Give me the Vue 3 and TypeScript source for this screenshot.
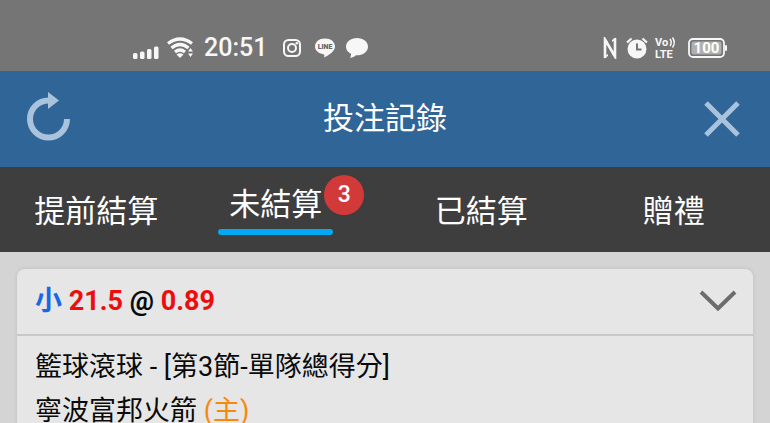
<script setup lang="ts">
import { ref } from 'vue'

interface Tab {
  id: string
  label: string
  count?: number
}

const tabs: Tab[] = [
  { id: 'early', label: '提前結算' },
  { id: 'open', label: '未結算', count: 3 },
  { id: 'settled', label: '已結算' },
  { id: 'gift', label: '贈禮' },
]
const active = ref('open')
const expanded = ref(true)
</script>

<template>
  <div class="screen">
    <div class="status">
      <div class="group">
        <svg class="signal" width="26" height="14" viewBox="0 0 26 14" aria-hidden="true">
          <g fill="#f7f7f7">
            <rect x="0" y="8" width="4.500" height="6" rx="1.500" />
            <rect x="7" y="6.500" width="4.500" height="7.500" rx="1.500" />
            <rect x="14" y="4" width="4.500" height="10" rx="1.500" />
            <rect x="21" y="1.500" width="4.500" height="12.500" rx="1.500" />
          </g>
        </svg>
        <svg class="wifi" width="28" height="22" viewBox="0 0 28 22" aria-hidden="true">
          <g fill="none" stroke="#f7f7f7" stroke-width="3.200">
            <path d="M1 6.500Q13 -2.500 25 6.500" />
            <path d="M4.500 11Q13 4 21.500 11" />
            <path d="M8 15Q13 11 18 15" />
          </g>
          <path d="M9.500 17.500Q13 15 16.500 17.500L13 21Z" fill="#f7f7f7" />
          <path d="M21 14.500L23.500 11L26 14.500ZM21 16.500H26L23.500 20Z" fill="#f7f7f7" />
        </svg>
        <span class="clock">20:51</span>
        <svg class="insta" width="20" height="20" viewBox="0 0 20 20" aria-hidden="true">
          <g fill="none" stroke="#f7f7f7" stroke-width="2">
            <rect x="2" y="2" width="16" height="16" rx="4.500" />
            <circle cx="10" cy="10" r="4" />
          </g>
          <circle cx="14.800" cy="5.200" r="1.300" fill="#f7f7f7" />
        </svg>
        <svg class="line" width="22" height="20" viewBox="0 0 22 20" aria-hidden="true">
          <path d="M11 .5C5 .5 1 4 1 8.600C1 12.500 4.500 15.500 9.300 16.300C10.700 16.600 10.300 17.500 10.200 19.500C13 18.300 21 13.800 21 8.600C21 4 17 .5 11 .5Z" fill="#f7f7f7" />
          <text x="11" y="11" text-anchor="middle" class="line-text">LINE</text>
        </svg>
        <svg width="24" height="22" viewBox="0 0 24 22" aria-hidden="true">
          <path d="M12 1C5.800 1 1 4.700 1 9.700C1 12.800 3 15.300 6 16.800C6 18.800 5.600 20 5 21C7.500 20.700 9.500 19.500 11 18.300C17.800 18.500 23 14.700 23 9.700C23 4.700 18.200 1 12 1Z" fill="#f7f7f7" />
        </svg>
      </div>
      <div class="group">
        <svg width="14" height="22" viewBox="0 0 14 22" aria-hidden="true">
          <path d="M2 21V2.500L12 19.500V1" fill="none" stroke="#f7f7f7" stroke-width="2.600" />
          <path d="M1 1L5 4.500V9L1 3ZM13 21L9 17.500V13L13 19ZM1 21.500L5 19V17L2 19ZM13 .5L9 3V5L12 3Z" fill="#f7f7f7" />
        </svg>
        <svg class="alarm" width="22" height="22" viewBox="0 0 22 22" aria-hidden="true">
          <circle cx="11" cy="12" r="9.500" fill="#f7f7f7" />
          <path d="M1 5.500L5.500 1.500M21 5.500L16.500 1.500" stroke="#f7f7f7" stroke-width="2.200" />
          <path d="M11 6.500V12.500H15.500" fill="none" stroke="#757575" stroke-width="2" />
        </svg>
        <svg class="volte" width="22" height="22" viewBox="0 0 22 22" aria-hidden="true">
          <text x="0" y="9" class="volte-text">Vo</text>
          <path d="M15 2Q17.500 5.500 15 9M17.500 .5Q21 5.500 17.500 10.500" fill="none" stroke="#f7f7f7" stroke-width="1.500" />
          <text x="0" y="21" class="volte-text">LTE</text>
        </svg>
        <svg class="battery" width="39" height="20" viewBox="0 0 39 20" aria-hidden="true">
          <rect x="1" y="1" width="35" height="18" rx="4" fill="none" stroke="#f7f7f7" stroke-width="1.800" />
          <rect x="3.500" y="3.500" width="30" height="13" rx="2" fill="#b0b0b0" />
          <rect x="37" y="7" width="2" height="6" rx="1" fill="#f7f7f7" />
          <text x="18.500" y="15" text-anchor="middle" class="battery-text">100</text>
        </svg>
      </div>
    </div>

    <header class="header">
      <button type="button" class="icon-button" aria-label="重新整理">
        <svg width="44" height="50" viewBox="0 0 44 50">
          <path d="M41 25A18.500 18.500 0 1 1 22.500 6.500" fill="none" stroke="#a9c3dc" stroke-width="6" />
          <path d="M22 -2L33 6.500L22 15Z" fill="#a9c3dc" />
        </svg>
      </button>
      <h1>投注記錄</h1>
      <button type="button" class="icon-button" aria-label="關閉">
        <svg width="36" height="36" viewBox="0 0 36 36">
          <path d="M2 2L34 34M34 2L2 34" stroke="#a9c3dc" stroke-width="5" />
        </svg>
      </button>
    </header>

    <nav class="tabs">
      <button
        v-for="tab in tabs"
        :key="tab.id"
        type="button"
        class="tab"
        :class="{ active: tab.id === active, counted: tab.count }"
        @click="active = tab.id"
      >
        <span class="tab-label">
          {{ tab.label }}
          <span v-if="tab.count" class="badge">{{ tab.count }}</span>
        </span>
      </button>
    </nav>

    <main class="content">
      <article class="card">
        <button type="button" class="card-head" :aria-expanded="expanded" @click="expanded = !expanded">
          <span class="pick"><span class="side">小</span> <span class="num">21.5</span> @ <span class="num">0.89</span></span>
          <svg width="38" height="22" viewBox="0 0 38 22" aria-hidden="true">
            <path d="M2 2L19 18.500L36 2" fill="none" stroke="#6c6c6c" stroke-width="4" />
          </svg>
        </button>
        <div v-if="expanded" class="card-body">
          <p>籃球滾球 - [第3節-單隊總得分]</p>
          <p>寧波富邦火箭 <span class="home">(主)</span></p>
        </div>
      </article>
    </main>
  </div>
</template>

<style>
body {
  margin: 0;
  background: #d4d4d4;
}
</style>

<style scoped>
.screen {
  display: flex;
  flex-direction: column;
  height: 100vh;
  overflow: hidden;
  background: #d4d4d4;
  font-family: Roboto, "Noto Sans CJK TC", sans-serif;
}
button {
  border: 0;
  padding: 0;
  background: none;
  color: inherit;
  font: inherit;
  cursor: pointer;
}
.status {
  display: flex;
  flex: none;
  justify-content: space-between;
  box-sizing: border-box;
  height: 71px;
  padding: 26px 43px 0 133px;
  background: #757575;
  color: #f7f7f7;
}
.group {
  display: flex;
  align-items: center;
  height: 44px;
}
.signal {
  margin: 8px 8px 0 0;
}
.wifi {
  margin-right: 9px;
}
.clock {
  margin-right: 15px;
  font-size: 25px;
  font-weight: 500;
  line-height: 44px;
}
.insta {
  margin-right: 12px;
}
.line {
  margin-right: 9px;
}
.line-text {
  fill: #666;
  font-size: 7px;
  font-weight: 900;
}
.alarm {
  margin: 0 7px 0 9px;
}
.volte-text {
  fill: #f7f7f7;
  font-size: 11px;
  font-weight: 700;
}
.volte {
  overflow: visible;
}
.battery {
  margin-left: 11px;
}
.battery-text {
  fill: #fff;
  font-size: 15px;
  font-weight: 700;
}
.header {
  display: flex;
  flex: none;
  align-items: center;
  justify-content: space-between;
  height: 96px;
  padding: 0 26px;
  background: #306598;
}
.icon-button {
  display: flex;
  align-items: center;
  justify-content: center;
  width: 44px;
  height: 52px;
}
.icon-button svg {
  overflow: visible;
}
.header h1 {
  margin: 0;
  color: #fff;
  font-size: 31px;
  font-weight: 400;
  line-height: 44px;
}
.tabs {
  display: grid;
  flex: none;
  grid-template-columns: repeat(4, 1fr);
  height: 85px;
  background: #3e3e3e;
  color: #fff;
  font-size: 31px;
}
.tab {
  display: flex;
  align-items: center;
  justify-content: center;
  padding-top: 5px;
}
.tab-label {
  position: relative;
  line-height: 44px;
}
.active .tab-label {
  padding: 0 11px 4px;
  margin-bottom: 6px;
}
.active .tab-label::after {
  content: "";
  display: block;
  height: 6px;
  margin: 2px -11px -4px;
  border-radius: 3px;
  background: #03a9f4;
}
.counted {
  padding-right: 26px;
}
.badge {
  position: absolute;
  top: -8px;
  right: -31px;
  width: 40px;
  height: 40px;
  border-radius: 50%;
  background: #d23939;
  font-size: 23px;
  font-weight: 500;
  line-height: 40px;
  text-align: center;
}
.content {
  padding: 17px;
}
.card {
  border-radius: 8px;
  background: #e6e6e6;
  box-shadow: 0 0 4px rgba(0, 0, 0, 0.1);
  color: #0a0a0a;
}
.card-head {
  display: flex;
  align-items: center;
  justify-content: space-between;
  width: 100%;
  height: 67px;
  padding: 0 16px 2px 18px;
  border-bottom: 2px solid #c8c8c8;
}
.pick {
  font-size: 27px;
  font-weight: 700;
  line-height: 44px;
}
.side {
  color: #1668e3;
}
.num {
  color: #ee0d0d;
}
.card-body {
  padding: 9px 18px;
  font-size: 27px;
  line-height: 44px;
}
.card-body p {
  margin: 0;
}
.home {
  color: #f7890f;
}
</style>
